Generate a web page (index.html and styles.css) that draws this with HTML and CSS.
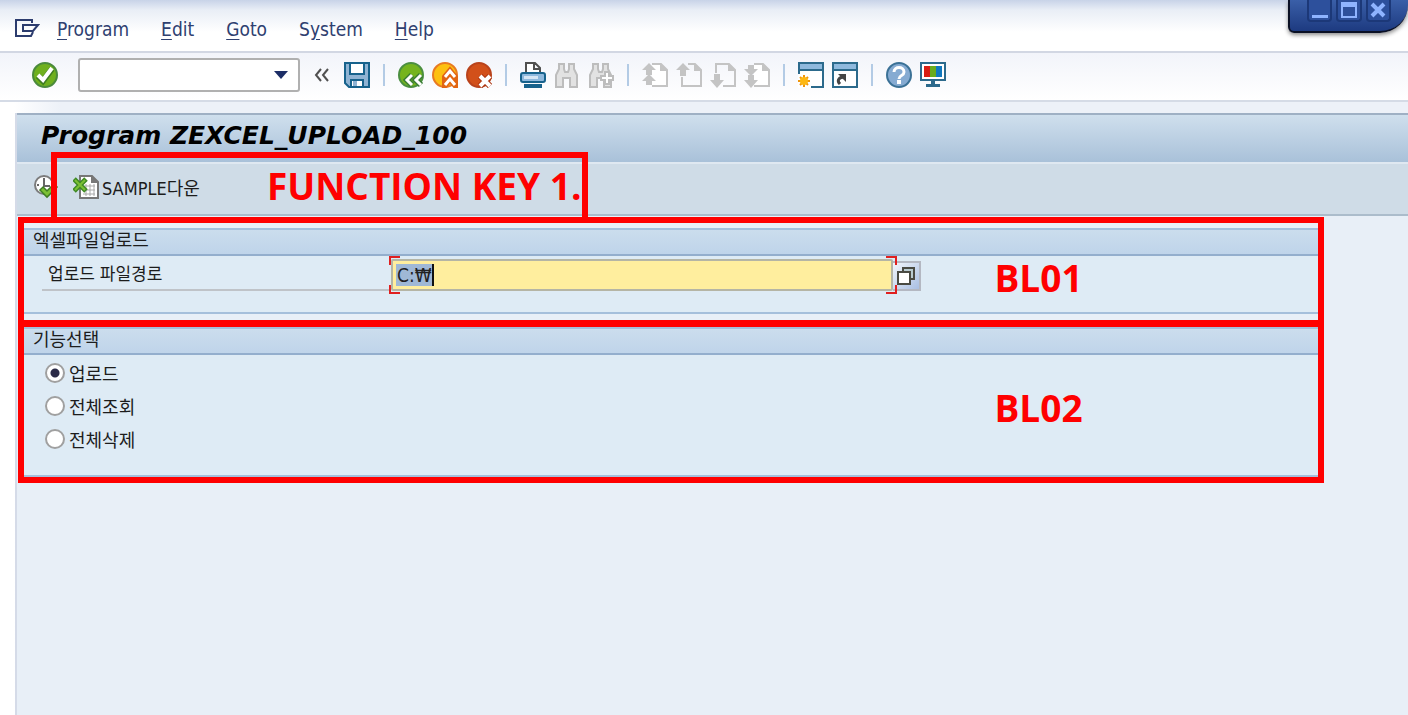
FILE: index.html
```
<!DOCTYPE html>
<html lang="ko">
<head>
  <meta charset="UTF-8" />
  <meta name="viewport" content="width=device-width, initial-scale=1" />
  <title>Program ZEXCEL_UPLOAD_100</title>
  <link rel="stylesheet" href="styles.css">
</head>
<body>

  <header class="menubar">
    <button class="icon-btn" aria-label="Menu">
      <svg width="26" height="22" viewBox="0 0 26 22" fill="none" stroke="#2c3c6e" stroke-width="2">
        <path d="M18 5V2H2v16h15l2-4M9 7h15l-5 6H9z" />
      </svg>
    </button>
    <nav class="menu">
      <a href="#"><u>P</u>rogram</a>
      <a href="#"><u>E</u>dit</a>
      <a href="#"><u>G</u>oto</a>
      <a href="#">S<u>y</u>stem</a>
      <a href="#"><u>H</u>elp</a>
    </nav>
    <div class="window-controls">
      <button aria-label="Minimize">
        <svg width="18" height="18" viewBox="0 0 18 18"><path d="M1 14h16v3H1z" fill="#8fb4ff" /></svg>
      </button>
      <button aria-label="Maximize">
        <svg width="18" height="18" viewBox="0 0 18 18"><path d="M1 1h16v16H1zM3 6v9h12V6z" fill="#8fb4ff" fill-rule="evenodd" /></svg>
      </button>
      <button aria-label="Close">
        <svg width="18" height="18" viewBox="0 0 18 18"><path d="M3 3l12 12M15 3L3 15" stroke="#8fb4ff" stroke-width="4" /></svg>
      </button>
    </div>
  </header>

  <div class="toolbar">
    <button class="icon-btn" aria-label="Enter">
      <svg width="26" height="26" viewBox="0 0 26 26">
        <circle cx="13" cy="13" r="12" fill="#6fb01e" stroke="#4b8a3c" stroke-width="2" />
        <path d="M6 14l5 5 9-12" fill="none" stroke="#3f7d22" stroke-width="6" />
        <path d="M6 13l5 5 9-12" fill="none" stroke="#fff" stroke-width="4" />
      </svg>
    </button>
    <div class="command">
      <input type="text" aria-label="Command">
      <button aria-label="Command history">
        <svg width="14" height="8" viewBox="0 0 14 8"><path d="M0 0h14L7 8z" fill="#1c2d66" /></svg>
      </button>
    </div>
    <button class="icon-btn collapse" aria-label="Collapse">
      <svg width="16" height="14" viewBox="0 0 16 14" fill="none" stroke="#505050" stroke-width="2">
        <path d="M7 1L2 7l5 6M14 1L9 7l5 6" />
      </svg>
    </button>
    <button class="icon-btn" aria-label="Save">
      <svg width="26" height="26" viewBox="0 0 26 26">
        <path d="M1 1h24v24H5l-4-4z" fill="#8fb3d3" stroke="#17628c" stroke-width="2" />
        <path d="M6 1h14v11H6z" fill="#fff" stroke="#17628c" stroke-width="2" />
        <path d="M7 25v-7h12v7z" fill="#fff" stroke="#17628c" stroke-width="2" />
        <path d="M9 19h4v5H9z" fill="#8fb3d3" />
      </svg>
    </button>
    <span class="sep"></span>
    <button class="icon-btn" aria-label="Back">
      <svg width="26" height="26" viewBox="0 0 26 26">
        <circle cx="13" cy="13" r="12" fill="#75b41e" stroke="#4b8f40" stroke-width="2" />
        <path d="M14 13l-5 5 5 5M23 13l-5 5 5 5" fill="none" stroke="#3a7d35" stroke-width="6" />
        <path d="M14 13l-5 5 5 5M23 13l-5 5 5 5" fill="none" stroke="#fff" stroke-width="3" />
      </svg>
    </button>
    <button class="icon-btn" aria-label="Exit">
      <svg width="26" height="26" viewBox="0 0 26 26">
        <circle cx="13" cy="13" r="12" fill="#fdc010" stroke="#e87a22" stroke-width="2" />
        <path d="M13 15l5-6 5 6v8l-5-6-5 6z" fill="#e26512" stroke="#e26512" stroke-width="6" />
        <path d="M13 15l5-6 5 6M13 23l5-6 5 6" fill="none" stroke="#fff" stroke-width="3" />
      </svg>
    </button>
    <button class="icon-btn" aria-label="Cancel">
      <svg width="26" height="26" viewBox="0 0 26 26">
        <circle cx="13" cy="13" r="12" fill="#d2501a" stroke="#b9431c" stroke-width="2" />
        <path d="M14 14l10 10M24 14L14 24" stroke="#a8300c" stroke-width="6" />
        <path d="M14 14l10 10M24 14L14 24" stroke="#fff" stroke-width="4" />
      </svg>
    </button>
    <span class="sep"></span>
    <button class="icon-btn" aria-label="Print">
      <svg width="26" height="26" viewBox="0 0 26 26">
        <path d="M6 10V1h9l5 5v4M14 1v6h6" fill="#fff" stroke="#505050" stroke-width="2" />
        <rect x="1" y="11" width="24" height="9" rx="2" fill="#8fb9dd" stroke="#17628c" stroke-width="2" />
        <path d="M4 14h14v3H4z" fill="#d7e6f4" />
        <path d="M4 22h18v4H4z" fill="#17628c" />
      </svg>
    </button>
    <button class="icon-btn" aria-label="Find" disabled>
      <svg width="26" height="26" viewBox="0 0 26 26" fill="#e2e2e2" stroke="#bdbdbd" stroke-width="2">
        <path d="M5 2h5v5l1 3h3l1-3V2h5v5l3 6v12h-7v-9h-7v9H2V13l3-6z" />
      </svg>
    </button>
    <button class="icon-btn" aria-label="Find next" disabled>
      <svg width="26" height="26" viewBox="0 0 26 26" fill="#e2e2e2" stroke="#bdbdbd" stroke-width="2">
        <path d="M5 2h5v5l1 3h3l1-3V2h5v5l3 6v12h-7v-9h-7v9H2V13l3-6z" />
        <path d="M17 10h4v4h4v4h-4v4h-4v-4h-4v-4h4z" fill="#fff" />
      </svg>
    </button>
    <span class="sep"></span>
    <button class="icon-btn" aria-label="First page" disabled>
      <svg width="26" height="26" viewBox="0 0 26 26">
        <path d="M10 2h9l6 6v16H10" fill="#fff" stroke="#c4c4c4" stroke-width="2" />
        <path d="M18 1v8h8zM7 1l7 7h-4v5H4V8H0zM7 12l7 7h-4v4H4v-4H0z" fill="#c4c4c4" />
      </svg>
    </button>
    <button class="icon-btn" aria-label="Previous page" disabled>
      <svg width="26" height="26" viewBox="0 0 26 26">
        <path d="M12 2h7l6 6v16H6V15" fill="none" stroke="#c4c4c4" stroke-width="2" />
        <path d="M18 1v8h8zM7 1l7 7h-4v6H4V8H0z" fill="#c4c4c4" />
      </svg>
    </button>
    <button class="icon-btn" aria-label="Next page" disabled>
      <svg width="26" height="26" viewBox="0 0 26 26">
        <path d="M6 11V2h13l6 6v16H13" fill="none" stroke="#c4c4c4" stroke-width="2" />
        <path d="M18 1v8h8zM4 12h6v6h4l-7 8-7-8h4z" fill="#c4c4c4" />
      </svg>
    </button>
    <button class="icon-btn" aria-label="Last page" disabled>
      <svg width="26" height="26" viewBox="0 0 26 26">
        <path d="M10 2h9l6 6v16H10" fill="#fff" stroke="#c4c4c4" stroke-width="2" />
        <path d="M18 1v8h8zM4 3h6v4h4l-7 7-7-7h4zM4 13h6v5h4l-7 8-7-8h4z" fill="#c4c4c4" />
      </svg>
    </button>
    <span class="sep"></span>
    <button class="icon-btn" aria-label="New session">
      <svg width="26" height="26" viewBox="0 0 26 26">
        <path d="M1 1h24v24H1z" fill="#fff" stroke="#2c6a8c" stroke-width="2" />
        <path d="M2 2h22v5H2z" fill="#8fb9dd" />
        <path d="M1 8h24" stroke="#2c6a8c" stroke-width="2" />
        <path d="M0 12h13v14H0z" fill="#fff" />
        <path d="M6 13v12M0 19h12M2 15l8 8M10 15l-8 8" stroke="#f0950a" stroke-width="2" />
        <circle cx="6" cy="19" r="4" fill="#fdb813" />
      </svg>
    </button>
    <button class="icon-btn" aria-label="Shortcut">
      <svg width="26" height="26" viewBox="0 0 26 26">
        <path d="M1 1h24v24H1z" fill="#fff" stroke="#2c6a8c" stroke-width="2" />
        <path d="M2 2h22v5H2z" fill="#8fb9dd" />
        <path d="M1 8h24" stroke="#2c6a8c" stroke-width="2" />
        <path d="M8 22c-3-3-2-6 3-7" fill="none" stroke="#444" stroke-width="3" />
        <path d="M6 12h8v8z" fill="#444" />
      </svg>
    </button>
    <span class="sep"></span>
    <button class="icon-btn" aria-label="Help">
      <svg width="26" height="26" viewBox="0 0 26 26">
        <circle cx="13" cy="13" r="12" fill="#86abd2" stroke="#3b7196" stroke-width="2" />
        <path d="M8 10c0-6 10-6 10 0 0 4-5 3-5 7" fill="none" stroke="#fff" stroke-width="3" />
        <path d="M11 18h4v4h-4z" fill="#fff" />
      </svg>
    </button>
    <button class="icon-btn" aria-label="Customize layout">
      <svg width="26" height="26" viewBox="0 0 26 26">
        <path d="M1 1h24v17H1z" fill="#fff" stroke="#2c6a8c" stroke-width="2" />
        <path d="M4 4h6v11H4z" fill="#d81e14" />
        <path d="M10 4h6v11h-6z" fill="#69ab1c" />
        <path d="M16 4h6v11h-6z" fill="#1178be" />
        <path d="M11 18h4v4h5v3H6v-3h5z" fill="#2c6a8c" />
      </svg>
    </button>
  </div>

  <main class="screen">
    <h1>Program ZEXCEL_UPLOAD_100</h1>

    <div class="app-toolbar">
      <button class="icon-btn" aria-label="Execute">
        <svg width="26" height="26" viewBox="0 0 26 26">
          <circle cx="11" cy="11" r="9" fill="#fff" stroke="#7c7c7c" stroke-width="2" />
          <path d="M11 4v8h6M4 11h2M11 16v2" fill="none" stroke="#666" stroke-width="2" />
          <path d="M8 14l6 6 9-9" fill="none" stroke="#3f7d22" stroke-width="6" />
          <path d="M9 15l5 5 8-8" fill="none" stroke="#7cc035" stroke-width="3" />
        </svg>
      </button>
      <button class="sample-btn">
        <svg width="26" height="26" viewBox="0 0 26 26">
          <path d="M7 2h12l6 6v16H7z" fill="#fff" stroke="#777" stroke-width="2" />
          <path d="M18 1v8h8z" fill="#777" />
          <path d="M10 12h12M10 16h12M10 20h12M13 10v12M17 10v12M21 10v12" stroke="#a9a9a9" />
          <path d="M1 5l12 12M13 5L1 17" stroke="#3f8a24" stroke-width="5" />
          <path d="M2 6l10 10M12 6L2 16" stroke="#7cc035" stroke-width="2" />
        </svg>
        SAMPLE다운
      </button>
      <div class="function-mark"><strong>FUNCTION KEY 1.</strong></div>
    </div>

    <section class="block">
      <div class="group">
        <h2>엑셀파일업로드</h2>
        <div class="file-row">
          <label for="filePath">업로드 파일경로</label>
          <div class="path-field">
            <input type="text" id="filePath" value="C:₩">
          </div>
          <button class="match-btn" aria-label="Browse">
            <svg width="20" height="20" viewBox="0 0 20 20" fill="#fff" stroke="#4a4a42" stroke-width="2">
              <path d="M7 2h11v11H7z" fill="#b9cbd0" />
              <path d="M2 6h12v12H2z" />
            </svg>
          </button>
        </div>
      </div>
      <strong class="block-mark">BL01</strong>
    </section>

    <section class="block">
      <div class="group group-options">
        <h2>기능선택</h2>
        <div class="options">
          <label><input type="radio" name="func" checked>업로드</label>
          <label><input type="radio" name="func">전체조회</label>
          <label><input type="radio" name="func">전체삭제</label>
        </div>
      </div>
      <strong class="block-mark">BL02</strong>
    </section>
  </main>

</body>
</html>
```
FILE: styles.css
```
* {
  box-sizing: border-box;
  margin: 0;
  padding: 0;
}
body {
  background: linear-gradient(90deg, #fff 14px, #edf1f8 60px);
  color: #1c1c1c;
  font-family: 'DejaVu Sans Condensed', 'Noto Sans CJK KR', sans-serif;
  font-size: 18px;
  min-height: 100vh;
  display: flex;
  flex-direction: column;
}
button {
  background: none;
  border: none;
  color: inherit;
  font: inherit;
}
svg {
  display: block;
}

/* menu */
.menubar {
  position: relative;
  display: flex;
  align-items: center;
  gap: 17px;
  height: 53px;
  padding: 6px 14px 0;
  background: linear-gradient(#c8d3e8, #e9eef6 10px, #fff 32px);
  border-bottom: 2px solid #d2d7e3;
}
.menu {
  display: flex;
  gap: 32px;
}
.menu a {
  color: #2f4070;
  font-size: 19px;
  text-decoration: none;
}
.menu u {
  text-underline-offset: 3px;
}
.window-controls {
  position: absolute;
  top: 0;
  right: 0;
  display: flex;
  gap: 4px;
  width: 120px;
  height: 33px;
  padding: 0 17px 10px;
  background: linear-gradient(#3a5fa8, #1d3a80);
  border: solid #0a1024;
  border-width: 0 0 2px 2px;
  border-radius: 0 0 28px 6px;
  box-shadow: 0 2px 4px #8a8a8a;
}
.window-controls button {
  display: flex;
  align-items: center;
  justify-content: center;
  width: 26px;
  height: 22px;
  background: #2d509c;
  border: solid #1c3878;
  border-width: 0 2px 2px;
  border-radius: 0 0 4px 4px;
}

/* standard toolbar */
.toolbar {
  display: flex;
  align-items: center;
  gap: 8px;
  height: 49px;
  padding: 0 32px 3px;
  background: linear-gradient(#f2f4fa, #fff);
  border-bottom: 2px solid #d5dbe6;
}
.icon-btn {
  flex-shrink: 0;
}
.command {
  display: flex;
  align-items: center;
  width: 222px;
  height: 34px;
  margin-left: 12px;
  background: #fff;
  border: 2px solid #b0b0b0;
  border-radius: 3px;
}
.command input {
  flex: 1;
  min-width: 0;
  height: 100%;
  border: none;
  background: none;
  font: inherit;
}
.command button {
  padding: 0 10px;
}
.collapse {
  margin: 0 6px;
}
.sep {
  width: 2px;
  height: 22px;
  margin: 0 5px;
  background: #b3cbe5;
}

/* screen area */
.screen {
  flex: 1;
  margin: 11px 0 0 15px;
  background: #e8eff7;
  border-left: 2px solid #d5dbe8;
}
h1 {
  height: 49px;
  padding: 0 24px 4px;
  line-height: 42px;
  background: linear-gradient(#cfdfed, #a9c1d9);
  border-top: 2px solid #9fb0c4;
  color: #000;
  font-family: 'DejaVu Sans', sans-serif;
  font-size: 25px;
  font-style: italic;
  font-weight: bold;
}
.app-toolbar {
  position: relative;
  display: flex;
  align-items: center;
  gap: 14px;
  height: 54px;
  padding: 0 16px 4px;
  background: #cfdce7;
  border-top: 2px solid #dfe8f1;
  border-bottom: 2px solid #abbccb;
}
.sample-btn {
  display: flex;
  align-items: center;
  gap: 3px;
}

/* red marks */
.function-mark {
  position: absolute;
  top: -12px;
  left: 34px;
  width: 537px;
  height: 71px;
  padding-left: 210px;
  line-height: 56px;
  border: 6px solid #f00;
  white-space: nowrap;
}
.function-mark strong,
.block-mark {
  color: #f00;
  font-family: 'Open Sans', sans-serif;
  font-size: 37px;
  font-weight: bold;
}
.block {
  position: relative;
  margin: 1px 84px 0 1px;
  border: 6px solid #f00;
}
.block + .block {
  margin-top: -5px;
}
.block-mark {
  position: absolute;
  top: 50%;
  left: 75%;
  line-height: 40px;
  margin-top: -14px;
}

/* group boxes */
.group {
  margin: 5px 0 6px;
  padding-bottom: 20px;
  background: #deebf5;
  border-top: 2px solid #a5bfdb;
  border-bottom: 2px solid #a5bfdb;
}
.group h2 {
  height: 26px;
  padding-left: 9px;
  line-height: 22px;
  background: linear-gradient(#cbdded, #bfd4ea);
  border-bottom: 2px solid #93aecd;
  font-size: 18px;
  font-weight: normal;
}
.group-options {
  margin: 0;
}
.file-row {
  display: flex;
  align-items: flex-end;
  padding: 3px 0 1px 18px;
}
.file-row label {
  width: 347px;
  height: 32px;
  padding-left: 6px;
  line-height: 30px;
  border-bottom: 2px solid #bfc3c8;
  font-size: 17px;
}
.path-field {
  position: relative;
  width: 508px;
  padding: 0 4px 0 2px;
}
.path-field::before,
.path-field::after {
  content: "";
  position: absolute;
  top: -3px;
  bottom: -3px;
  width: 9px;
  /* corner brackets, open in the middle */
  border: 2px solid #e02020;
  clip-path: polygon(0 0, 100% 0, 100% 9px, 0 9px, 0 calc(100% - 9px), 100% calc(100% - 9px), 100% 100%, 0 100%);
}
.path-field::before {
  left: 0;
  border-right: none;
}
.path-field::after {
  right: 0;
  border-left: none;
}
.path-field input {
  display: block;
  width: 100%;
  height: 32px;
  padding-left: 4px;
  background: linear-gradient(#9fb8d6, #9fb8d6) 3px 50% / 36px 22px no-repeat,
    linear-gradient(#111, #111) 39px 50% / 2px 22px no-repeat, #ffee9e;
  border: 2px solid #b5b5a5;
  border-radius: 2px;
  color: #222;
  font: inherit;
  font-size: 19px;
}
.match-btn {
  display: flex;
  align-items: center;
  justify-content: center;
  width: 28px;
  height: 30px;
  margin-left: -4px;
  background: linear-gradient(135deg, #f2f5fa, #a9bfe3);
  border: 2px solid #b4b8c2;
  border-left: none;
}
.options {
  display: flex;
  flex-direction: column;
  padding: 1px 0 0 21px;
}
.options label {
  display: flex;
  align-items: center;
  gap: 4px;
  height: 33px;
}
.options input {
  appearance: none;
  width: 20px;
  height: 20px;
  background: #fff;
  border: 2px solid #a0a0a0;
  border-radius: 50%;
}
.options input:checked {
  background: radial-gradient(#2b2b48 4px, #fff 5px);
}
```
